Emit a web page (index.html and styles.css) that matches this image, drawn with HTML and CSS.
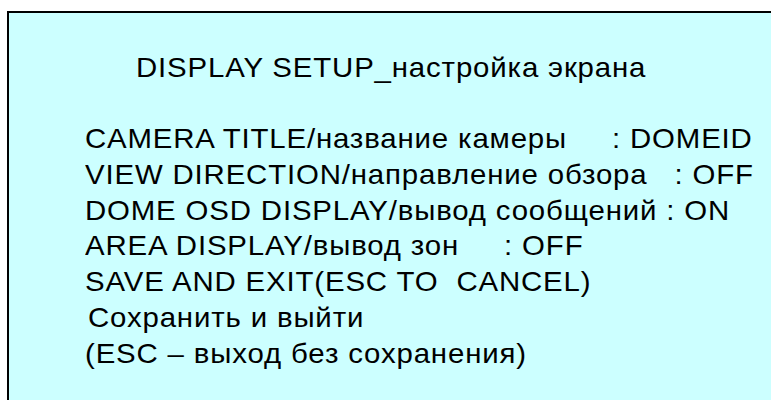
FILE: index.html
```html
<!DOCTYPE html>
<html lang="ru">
<head>
<meta charset="utf-8">
<title>DISPLAY SETUP</title>
<link rel="stylesheet" href="styles.css">
</head>
<body>
<div class="screen">
  <div class="title"><span class="txt">DISPLAY SETUP_настройка экрана</span></div>
  <div class="menu">
    <div class="row"><span class="txt">CAMERA TITLE/название камеры     : DOMEID</span></div>
    <div class="row"><span class="txt">VIEW DIRECTION/направление обзора   : OFF</span></div>
    <div class="row"><span class="txt">DOME OSD DISPLAY/вывод сообщений : ON</span></div>
    <div class="row"><span class="txt">AREA DISPLAY/вывод зон     : OFF</span></div>
    <div class="row"><span class="txt">SAVE AND EXIT(ESC TO  CANCEL)</span></div>
    <div class="row row-indent"><span class="txt">Сохранить и выйти</span></div>
    <div class="row"><span class="txt">(ESC – выход без сохранения)</span></div>
  </div>
</div>
</body>
</html>
```

FILE: styles.css
```css
html, body {
  margin: 0;
  padding: 0;
  height: 100%;
  background: #ffffff;
  overflow: hidden;
}

/* the on-screen menu panel, running off the right and bottom edges */
.screen {
  box-sizing: border-box;
  margin: 11px 0 0 7px;
  height: calc(100% - 11px);
  border-top: 2px solid #000;
  border-left: 2px solid #000;
  background: #ccffff;
  color: #000;
  font-family: "Liberation Sans", Arial, sans-serif;
  font-size: 28px;
  line-height: 35.7px;
  padding: 37px 0 0 76px;
}

/* OSD characters sit on a slightly wide cell */
.txt {
  display: inline-block;
  white-space: pre;
  letter-spacing: 0.8px;
  transform: scaleX(1.05);
  transform-origin: left center;
}

.title {
  padding-left: 51px;
  margin-bottom: 35.7px;
}

.row {
  height: 35.7px;
}

.row-indent {
  padding-left: 3px;
}
```
